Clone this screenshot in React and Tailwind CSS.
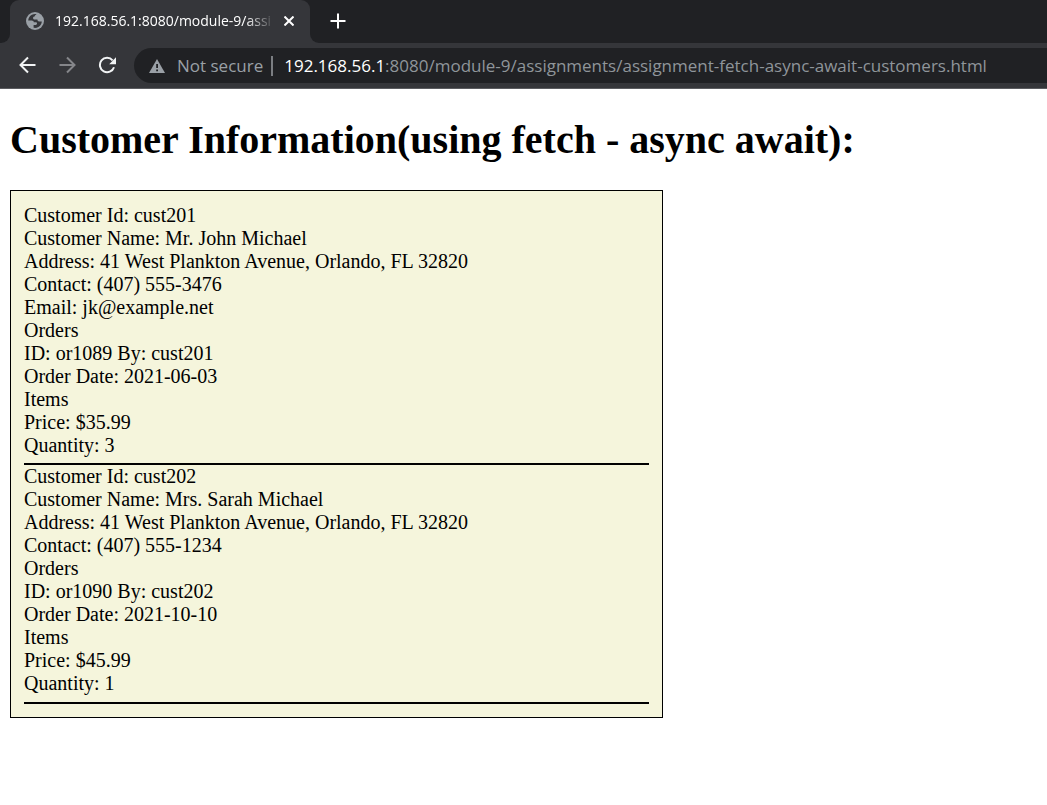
const customers = [
  {
    id: 'cust201',
    lines: [
      'Customer Id: cust201',
      'Customer Name: Mr. John Michael',
      'Address: 41 West Plankton Avenue, Orlando, FL 32820',
      'Contact: (407) 555-3476',
      'Email: jk@example.net',
      'Orders',
      'ID: or1089 By: cust201',
      'Order Date: 2021-06-03',
      'Items',
      'Price: $35.99',
      'Quantity: 3',
    ],
  },
  {
    id: 'cust202',
    lines: [
      'Customer Id: cust202',
      'Customer Name: Mrs. Sarah Michael',
      'Address: 41 West Plankton Avenue, Orlando, FL 32820',
      'Contact: (407) 555-1234',
      'Orders',
      'ID: or1090 By: cust202',
      'Order Date: 2021-10-10',
      'Items',
      'Price: $45.99',
      'Quantity: 1',
    ],
  },
];

function Globe() {
  return (
    <svg viewBox="0 0 18 18" className="size-[18px] shrink-0" aria-hidden="true">
      <circle cx="9" cy="9" r="9" fill="#9aa0a6" />
      <path
        d="M10.6 2.2C8 1.6 4.8 2.8 3.2 5.2c-.6 1-.9 2-1 3.2h3.400c1.400 0 2.200.7 2.200 1.900h1.900c1 0 1.500.6 1.300 1.500-.2.900-1 1.300-1.900 1.300H7.600v2.700c2.900.6 5.900-.8 7.300-3.300.6-1 .9-2 .9-3.100h-2.700c-1.200 0-1.700-.7-1.700-1.800H8.700c-1.100 0-1.700-.6-1.700-1.500s.7-1.500 1.600-1.500c.2-1.100.8-1.900 2-2.400z"
        fill="#35363a"
      />
    </svg>
  );
}

function Tab() {
  return (
    <div className="flex h-[43px] items-end bg-[#202124]">
      <div className="h-full w-[10px] bg-[#35363a]">
        <div className="h-full rounded-br-[9px] bg-[#202124]" />
      </div>
      <div className="flex h-full w-[300px] items-center rounded-t-[9px] bg-[#35363a] px-4 pb-px">
        <Globe />
        <span className="ml-[11px] whitespace-nowrap text-sm text-white [mask-image:linear-gradient(to_right,black_190px,transparent_220px)]">
          192.168.56.1:8080/module-9/assi
        </span>
        <button aria-label="Close tab" className="ml-auto flex size-[10px] shrink-0 items-center justify-center">
          <svg viewBox="0 0 10 10" className="size-[10px]" stroke="#fff" strokeWidth="2" fill="none">
            <path d="M0.500 0.500L9.500 9.500M9.500 0.500L0.500 9.500" />
          </svg>
        </button>
      </div>
      <div className="h-full flex-1 bg-[#35363a]">
        <div className="flex h-full items-center rounded-bl-[9px] bg-[#202124] pb-px pl-5">
          <button aria-label="New tab" className="flex size-4 items-center justify-center">
            <svg viewBox="0 0 16 16" className="size-4" stroke="#fff" strokeWidth="2" fill="none">
              <path d="M8 0.500V15.500M0.500 8H15.500" />
            </svg>
          </button>
        </div>
      </div>
    </div>
  );
}

function Arrow({ label, color, d }) {
  return (
    <button aria-label={label} className="flex size-5 items-center justify-center">
      <svg viewBox="0 0 18 18" className="size-[18px]" stroke={color} strokeWidth="2" fill="none">
        <path d={d} />
      </svg>
    </button>
  );
}

function Toolbar() {
  return (
    <div className="flex h-[46px] items-start gap-[17px] border-b border-[#5b5c60] bg-[#35363a] pt-[5px] pl-[17px]">
      <div className="flex h-[34px] shrink-0 items-center gap-5">
        <Arrow label="Back" color="#f1f3f4" d="M17.500 9H2.500M10 1.500L2.500 9L10 16.500" />
        <Arrow label="Forward" color="#85868a" d="M1.500 9H16.500M9 1.500L16.500 9L9 16.500" />
        <button aria-label="Reload" className="flex size-5 items-center justify-center">
          <svg viewBox="0 0 18 18" className="size-[18px]" fill="none">
            <path d="M16 11.200A7.200 7.200 0 1 1 14.600 4.300" stroke="#f1f3f4" strokeWidth="2" />
            <path d="M18 1.300V8.300H11.200z" fill="#f1f3f4" />
          </svg>
        </button>
      </div>
      <div className="flex h-[35px] min-w-0 flex-1 items-center rounded-l-full bg-[#202124] pl-[15px] text-[17px]">
        <svg viewBox="0 0 16 14" className="h-[14px] w-4 shrink-0" aria-hidden="true">
          <path d="M8 0L16 14H0z" fill="#9aa0a6" />
          <path d="M7.200 5h1.800v4H7.200zM7.200 10.500h1.800v1.700H7.200z" fill="#202124" />
        </svg>
        <span className="ml-3 shrink-0 whitespace-nowrap text-[#9aa0a6]">Not secure</span>
        <span className="ml-2 h-5 w-[2px] shrink-0 bg-[#7b7e82]" />
        <a href="#customers" className="ml-[11px] truncate text-[#8f959a]">
          <span className="text-white">192.168.56.1</span>
          :8080/module-9/assignments/assignment-fetch-async-await-customers.html
        </a>
      </div>
    </div>
  );
}

export default function App() {
  return (
    <div className="min-h-screen bg-white">
      <header className="font-['Open_Sans','Noto_Sans',sans-serif]">
        <Tab />
        <Toolbar />
      </header>
      <main className="px-[10px] pt-7 font-['Liberation_Serif',serif] text-black">
        <h1 className="text-[40px] font-bold leading-[46px]">
          Customer Information(using fetch - async await):
        </h1>
        <section
          id="customers"
          className="mt-[27px] w-[653px] max-w-full border border-black bg-[#f5f5dc] px-[13px] pt-[13px] pb-[13px] text-xl leading-[23px]"
        >
          {customers.map((customer) => (
            <article key={customer.id} className="border-b-2 border-black pb-[6px] last:pb-[7px]">
              {customer.lines.map((line) => (
                <p key={line}>{line}</p>
              ))}
            </article>
          ))}
        </section>
      </main>
    </div>
  );
}
